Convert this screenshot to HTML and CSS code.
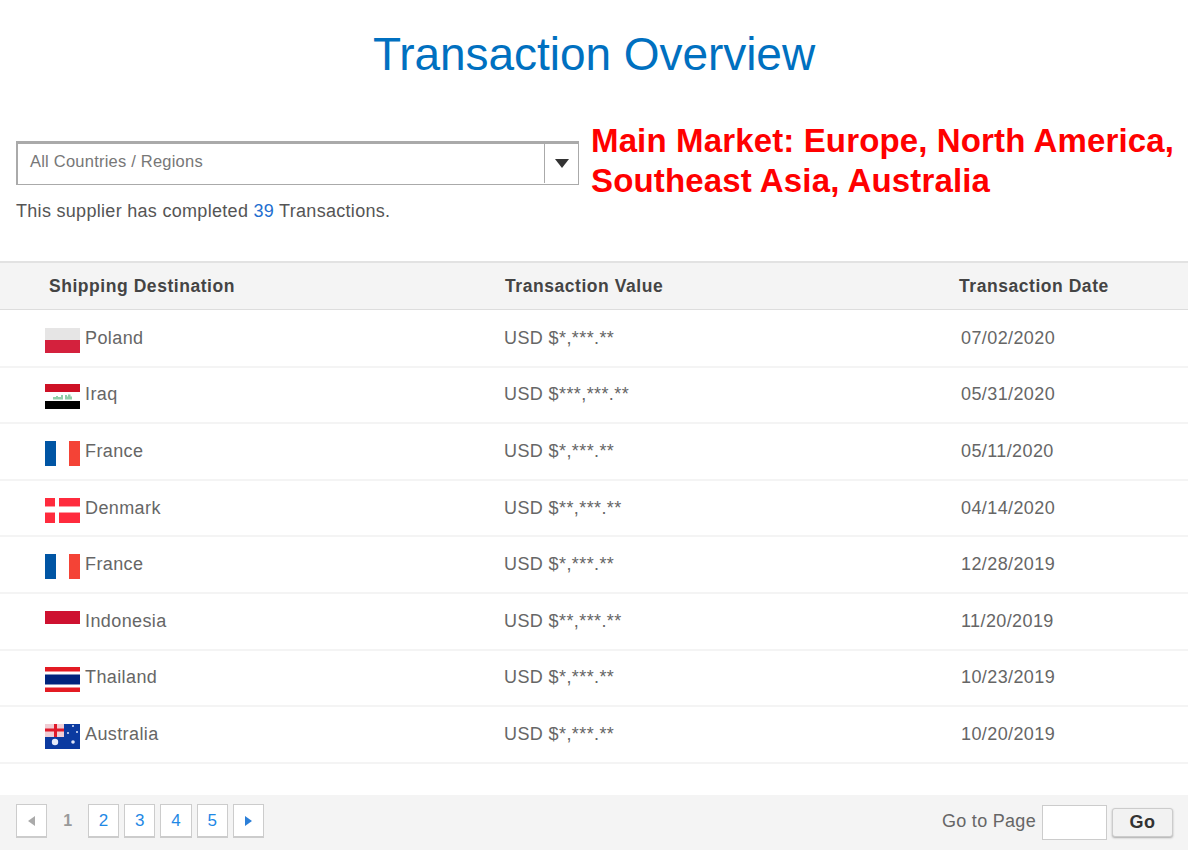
FILE: index.html
```html
<!DOCTYPE html>
<html lang="en">
<head>
<meta charset="utf-8">
<title>Transaction Overview</title>
<link rel="stylesheet" href="styles.css">
</head>
<body>
<h1 class="title">Transaction Overview</h1>
<section class="intro">
  <div class="filter">
    <div class="select">
      <span class="select-text">All Countries / Regions</span>
      <span class="select-arrow"><i class="tri-down"></i></span>
    </div>
    <p class="summary">This supplier has completed <a class="count">39</a> Transactions.</p>
  </div>
  <p class="market">Main Market: Europe, North America,<br>Southeast Asia, Australia</p>
</section>
<div class="table">
  <div class="row head"><span>Shipping Destination</span><span>Transaction Value</span><span>Transaction Date</span></div>
  <div class="row">
    <span class="dest"><svg class="flag" viewBox="0 0 35 25"><rect width="35" height="12" fill="#e6e5e5"/><rect y="12" width="35" height="13" fill="#d4213d"/></svg>Poland</span>
    <span>USD $*,***.**</span><span>07/02/2020</span>
  </div>
  <div class="row">
    <span class="dest"><svg class="flag" viewBox="0 0 35 25"><rect width="35" height="8" fill="#ce1126"/><rect y="17" width="35" height="8" fill="#000"/><path d="M8 15.5v-2.5h3v-1h2v1h3v-2h2v4.500zM20 15.500v-4.500h2v1.500h1v-2h2.500v2h1.500v3z" fill="#8fd0a8"/></svg>Iraq</span>
    <span>USD $***,***.**</span><span>05/31/2020</span>
  </div>
  <div class="row">
    <span class="dest"><svg class="flag" viewBox="0 0 35 25"><rect width="11" height="25" fill="#0055a4"/><rect x="24" width="11" height="25" fill="#f44336"/></svg>France</span>
    <span>USD $*,***.**</span><span>05/11/2020</span>
  </div>
  <div class="row">
    <span class="dest"><svg class="flag" viewBox="0 0 35 25"><rect width="35" height="25" fill="#ff2b3d"/><rect y="8" width="35" height="7" fill="#ff9aa2"/><rect y="9" width="35" height="5" fill="#fff"/><rect x="10" width="4" height="25" fill="#fff"/></svg>Denmark</span>
    <span>USD $**,***.**</span><span>04/14/2020</span>
  </div>
  <div class="row">
    <span class="dest"><svg class="flag" viewBox="0 0 35 25"><rect width="11" height="25" fill="#0055a4"/><rect x="24" width="11" height="25" fill="#f44336"/></svg>France</span>
    <span>USD $*,***.**</span><span>12/28/2019</span>
  </div>
  <div class="row">
    <span class="dest"><svg class="flag" viewBox="0 0 35 25"><rect width="35" height="13" fill="#ce1130"/></svg>Indonesia</span>
    <span>USD $**,***.**</span><span>11/20/2019</span>
  </div>
  <div class="row">
    <span class="dest"><svg class="flag" viewBox="0 0 35 25"><rect width="35" height="4.5" fill="#e31b23"/><rect y="7.5" width="35" height="10" fill="#00247d"/><rect y="20.5" width="35" height="4.5" fill="#e31b23"/></svg>Thailand</span>
    <span>USD $*,***.**</span><span>10/23/2019</span>
  </div>
  <div class="row">
    <span class="dest"><svg class="flag" viewBox="0 0 35 25"><rect width="35" height="25" fill="#0b3aa0"/><rect width="19" height="13" fill="#f0cdd4"/><rect x="9" width="3" height="13" fill="#e01a2b"/><rect y="4.5" width="19" height="3" fill="#e01a2b"/><circle cx="10" cy="18" r="3.2" fill="#e6ecfa"/><circle cx="28" cy="18" r="1.8" fill="#dfe6f8"/><circle cx="23" cy="9" r="1" fill="#dfe6f8"/><circle cx="32" cy="8" r="1" fill="#dfe6f8"/><circle cx="28" cy="2" r="1" fill="#dfe6f8"/></svg>Australia</span>
    <span>USD $*,***.**</span><span>10/20/2019</span>
  </div>
</div>
<footer class="pager">
  <nav class="pages">
    <a class="page nav"><i class="tri-left"></i></a>
    <span class="current">1</span>
    <a class="page">2</a>
    <a class="page">3</a>
    <a class="page">4</a>
    <a class="page">5</a>
    <a class="page nav"><i class="tri-right"></i></a>
  </nav>
  <div class="goto">
    <label class="goto-label" for="p">Go to Page</label>
    <input class="goto-input" id="p" type="text">
    <button class="goto-btn" type="button">Go</button>
  </div>
</footer>
</body>
</html>
```
FILE: styles.css
```css
* { box-sizing: border-box; }
html, body { margin: 0; padding: 0; }
body { width: 1188px; height: 850px; overflow: hidden; background: #fff; font-family: "Liberation Sans", Arial, sans-serif; color: #555; font-size: 18px; }
.title { margin: 0; padding-top: 27px; height: 112px; text-align: center; font-size: 46px; line-height: 54px; font-weight: 400; color: #0070c0; letter-spacing: -0.05px; }
.intro { display: flex; height: 151px; padding-left: 16px; border-bottom: 2px solid #e2e2e2; }
.filter { width: 563px; padding-top: 29px; }
.select { display: flex; height: 44px; border: 1px solid #aaa; border-top-width: 3px; border-left-width: 2px; background: #fff; }
.select-text { flex: 1; padding-left: 12px; font-size: 16.5px; line-height: 34px; color: #777; letter-spacing: 0.22px; }
.select-arrow { width: 34px; display: flex; align-items: center; justify-content: center; border-left: 1px solid #aaa; margin-bottom: 1px; }
.tri-down { width: 0; height: 0; border-left: 7px solid transparent; border-right: 7px solid transparent; border-top: 9px solid #333; }
.summary { margin: 16px 0 0; font-size: 18px; line-height: 20px; letter-spacing: 0.3px; color: #555; }
.count { color: #1f6fd0; }
.market { margin: 0; padding: 9px 0 0 12px; font-size: 33px; line-height: 40px; font-weight: 700; letter-spacing: 0.14px; color: #f00; white-space: nowrap; }
.table { height: 532px; }
.row { display: grid; height: 56.6px; padding-left: 45px; align-items: center; border-bottom: 2px solid #f4f4f4; font-size: 18px; letter-spacing: 0.4px; color: #666; }
.row:not(.head) { grid-template-columns: 459px 457px 1fr; }
.row.head { height: 47px; margin-bottom: 1px; padding-left: 49px; grid-template-columns: 456px 454px 1fr; background: #f4f4f4; border-bottom: 1px solid #ddd; font-size: 17.5px; font-weight: 700; letter-spacing: 0.55px; color: #444; }
.dest { display: flex; align-items: center; gap: 5px; }
.flag { width: 35px; height: 25px; flex: none; margin-top: 4px; }
.pager { display: flex; justify-content: space-between; height: 55px; background: #f4f4f4; padding: 9px 15px 0 16px; }
.pages { display: flex; gap: 5px; height: 34px; }
.page { width: 31.2px; height: 34px; display: flex; align-items: center; justify-content: center; border: 1px solid #ccc; border-bottom-width: 2px; background: #fff; color: #1e88e5; font-size: 17px; }
.current { width: 30.8px; display: flex; align-items: center; justify-content: center; color: #999; font-size: 16px; font-weight: 700; }
.tri-left { width: 0; height: 0; border-top: 5px solid transparent; border-bottom: 5px solid transparent; border-right: 7px solid #aaa; }
.tri-right { width: 0; height: 0; border-top: 5px solid transparent; border-bottom: 5px solid transparent; border-left: 7px solid #2c7fd8; }
.goto { display: flex; align-items: flex-start; }
.goto-label { font-size: 18px; line-height: 34px; letter-spacing: 0.3px; color: #666; margin-right: 6px; }
.goto-input { width: 65px; height: 35px; margin: 1px 5px 0 0; border: 1px solid #ccc; background: #fff; padding: 0; }
.goto-btn { width: 61px; height: 29px; margin-top: 4px; border: 1px solid #ccc; border-radius: 3px; background: #f2f2f2; box-shadow: 0 1px 2px #aaa; font: 700 18px "Liberation Sans", Arial, sans-serif; letter-spacing: 0.4px; color: #333; padding: 0; }
```
